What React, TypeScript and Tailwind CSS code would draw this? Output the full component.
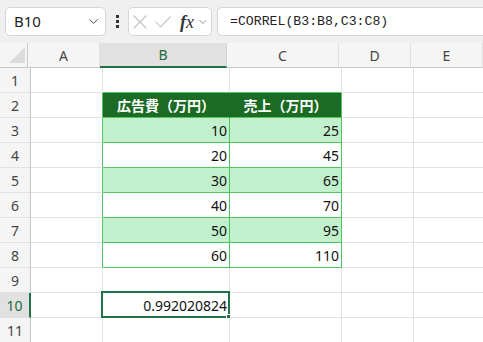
import { ChevronDown } from "lucide-react";

const cols = ["A", "B", "C", "D", "E"];
const widths = ["w-[72px]", "w-[127px]", "w-[112px]", "w-[72px]", "w-[72px]"];

const data: Record<number, [string, string]> = {
  3: ["10", "25"],
  4: ["20", "45"],
  5: ["30", "65"],
  6: ["40", "70"],
  7: ["50", "95"],
  8: ["60", "110"],
};

const font = { fontFamily: '"Noto Sans", "Noto Sans CJK JP", sans-serif' };

function Toolbar() {
  return (
    <div className="h-[43px] bg-[#f0f0f0] flex items-start pt-[7px] pl-[5px] gap-0">
      <div className="w-[101px] h-[29px] bg-white border border-[#d6d6d6] rounded-[5px] flex items-center justify-between pl-[8px] pr-[4px]">
        <span className="text-[15px] text-[#222]" style={font}>
          B10
        </span>
        <ChevronDown size={15} strokeWidth={1.6} className="text-[#444]" />
      </div>
      <div className="w-[22px] h-[29px] flex flex-col items-center justify-center gap-[2px]">
        <span className="w-[3px] h-[3px] bg-[#333]" />
        <span className="w-[3px] h-[3px] bg-[#333]" />
        <span className="w-[3px] h-[3px] bg-[#333]" />
      </div>
      <div className="w-[84px] h-[29px] bg-white border border-[#d6d6d6] rounded-[5px] flex items-center pl-[4px]">
        {/* cancel */}
        <svg width="14" height="14" viewBox="0 0 14 14" className="text-[#c4c4c4]">
          <path d="M0.5 0.5 L13.5 13.5 M13.5 0.5 L0.5 13.5" stroke="currentColor" strokeWidth="1.1" fill="none" />
        </svg>
        {/* enter */}
        <svg width="16" height="12" viewBox="0 0 16 12" className="ml-[8px] text-[#c4c4c4]">
          <path d="M0.5 5.5 L5.5 11 L15.5 0.5" stroke="currentColor" strokeWidth="1.1" fill="none" />
        </svg>
        <span
          className="ml-[9px] text-[18px] italic text-[#333] leading-none"
          style={{ fontFamily: '"Liberation Serif", serif' }}
        >
          <b>f</b>x
        </span>
        <ChevronDown size={12} strokeWidth={1.6} className="text-[#777] ml-[3px]" />
      </div>
      <div className="ml-[5px] flex-1 h-[29px] bg-white border border-r-0 border-[#d6d6d6] rounded-l-[5px] flex items-center pl-[12px]">
        <span
          className="text-[13.2px] text-[#222]"
          style={{ fontFamily: '"Liberation Mono", monospace' }}
        >
          =CORREL(B3:B8,C3:C8)
        </span>
      </div>
    </div>
  );
}

function HeaderRow() {
  return (
    <div className="flex h-[25px]" style={font}>
      <div className="w-[31px] h-full bg-[#f5f5f5] border-r border-b border-[#c8c8c8] flex items-end justify-end pr-[2px] pb-[4px]">
        <div className="w-0 h-0 border-l-[16px] border-l-transparent border-b-[16px] border-b-[#dcdcdc]" />
      </div>
      {cols.map((c, i) => {
        const sel = c === "B";
        return (
          <div
            key={c}
            className={`${widths[i]} h-full shrink-0 flex items-center justify-center text-[14px] border-r ${
              sel
                ? "bg-[#e1e1e1] text-[#1e6b3c] border-b-2 border-b-[#217346] border-r-[#d4d4d4]"
                : "bg-[#f5f5f5] text-[#444] border-b border-b-[#c8c8c8] border-r-[#e0e0e0]"
            }`}
          >
            {c}
          </div>
        );
      })}
    </div>
  );
}

function Row({ r }: { r: number }) {
  const selRow = r === 10;
  return (
    <div className="flex h-[25px]" style={font}>
      <div
        className={`w-[31px] h-full shrink-0 flex items-center justify-center text-[14px] border-b border-b-[#e1e1e1] ${
          selRow
            ? "bg-[#e1e1e1] text-[#1e6b3c] border-r-2 border-r-[#217346]"
            : "bg-[#f5f5f5] text-[#444] border-r border-r-[#c8c8c8]"
        }`}
      >
        {r}
      </div>
      {cols.map((c, i) => {
        const inTable = (c === "B" || c === "C") && r >= 2 && r <= 8;
        const header = inTable && r === 2;
        const band = inTable && (r === 3 || r === 5 || r === 7);
        let rightC = "border-r-[#e1e1e1]";
        let bottomC = "border-b-[#e1e1e1]";
        if (inTable) {
          rightC = header && c === "B" ? "border-r-[#1b6b24]" : "border-r-[#52c45f]";
          bottomC = "border-b-[#52c45f]";
        }
        if (c === "A" && r >= 2 && r <= 8) rightC = "border-r-[#52c45f]";
        if ((c === "B" || c === "C") && r === 1) bottomC = "border-b-[#52c45f]";
        const bg = header ? "bg-[#1b6b24]" : band ? "bg-[#c2efcc]" : "bg-white";
        let content: React.ReactNode = null;
        if (header) {
          content = (
            <span className="w-full text-center text-white font-bold text-[14px]">
              {c === "B" ? "広告費（万円）" : "売上（万円）"}
            </span>
          );
        } else if (data[r] && (c === "B" || c === "C")) {
          content = (
            <span className="w-full text-right pr-[2px] text-[14px] text-[#111]">
              {data[r][c === "B" ? 0 : 1]}
            </span>
          );
        } else if (r === 10 && c === "B") {
          content = (
            <span className="w-full text-right pr-[2px] text-[14px] text-[#111]">
              0.992020824
            </span>
          );
        }
        return (
          <div
            key={c}
            className={`${widths[i]} h-full shrink-0 relative flex items-center border-r border-b ${rightC} ${bottomC} ${bg}`}
          >
            {content}
            {r === 10 && c === "B" && (
              <>
                <div className="absolute -left-[2px] -top-[2px] -right-[1px] -bottom-[1px] border-2 border-[#217346] pointer-events-none" />
                <div className="absolute -right-[4px] -bottom-[4px] w-[7px] h-[7px] bg-[#217346] border border-white" />
              </>
            )}
          </div>
        );
      })}
    </div>
  );
}

export default function App() {
  return (
    <div className="w-[483px] h-[342px] overflow-hidden bg-white">
      <Toolbar />
      <HeaderRow />
      {Array.from({ length: 11 }, (_, k) => (
        <Row key={k} r={k + 1} />
      ))}
    </div>
  );
}
